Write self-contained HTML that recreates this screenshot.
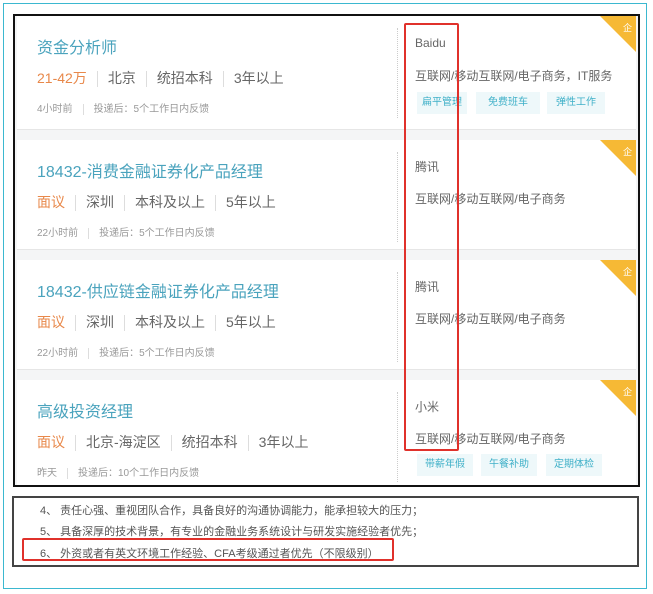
<!DOCTYPE html>
<html><head><meta charset="utf-8"><style>
*{margin:0;padding:0;box-sizing:border-box}
body{width:653px;height:594px;background:#fff;position:relative;overflow:hidden;font-family:"Liberation Sans","Noto Sans CJK SC",sans-serif}
.a{position:absolute;white-space:nowrap}
.outer{left:3px;top:3px;width:644px;height:586px;border:1px solid #3bb8d0}
.blk{left:13px;top:14px;width:627px;height:473px;border:2px solid #111;background:#f4f5f6}
.card{position:absolute;left:2px;width:619px;background:#fff;border-bottom:1px solid #e6e6e6}
.title{left:20px;font-size:16px;color:#4aa3bd}
.meta{left:20px;font-size:14px;color:#666}
.meta .o{color:#e8884a}
.meta i{display:inline-block;width:1px;height:16px;background:#ddd;vertical-align:middle;margin:0 10px}
.sm{left:20px;font-size:10px;color:#999}
.sm i{display:inline-block;width:1px;height:11px;background:#ddd;vertical-align:middle;margin:0 10px}
.dot{left:380px;width:0;border-left:1px dotted #ccc}
.co{left:398px;font-size:12px;color:#666}
.ind{left:398px;font-size:12px;color:#666}
.tag{position:absolute;height:22px;background:#eef8fa;color:#3fb0c8;font-size:10px;line-height:22px;text-align:center}
.tri{position:absolute;right:0;top:0;width:0;height:0;border-top:36px solid #f6b935;border-left:36px solid transparent}
.tri b{position:absolute;top:-31px;right:4px;color:#fff;font-size:9px;font-weight:normal}
.bot{left:12px;top:496px;width:627px;height:71px;border:2px solid #444}
.bot div{position:absolute;left:26px;font-size:11px;color:#555}
.red{border:2px solid #e0312b;border-radius:2px}
</style></head><body>
<div class="a outer"></div>
<div class="a blk">
 <div class="card" style="top:0;height:114px">
  <div class="a title" style="top:18px">资金分析师</div>
  <div class="a meta" style="top:52px"><span class="o">21-42万</span><i></i>北京<i></i>统招本科<i></i>3年以上</div>
  <div class="a sm" style="top:84px">4小时前<i></i>投递后：5个工作日内反馈</div>
  <div class="a dot" style="top:12px;height:90px"></div>
  <div class="a co" style="top:20px">Baidu</div>
  <div class="a ind" style="top:51px">互联网/移动互联网/电子商务，IT服务</div>
  <div class="tag" style="left:400px;top:76px;width:50px">扁平管理</div>
  <div class="tag" style="left:459px;top:76px;width:64px">免费班车</div>
  <div class="tag" style="left:530px;top:76px;width:58px">弹性工作</div>
  <div class="tri"><b>企</b></div>
 </div>
 <div class="card" style="top:124px;height:110px">
  <div class="a title" style="top:18px">18432-消费金融证券化产品经理</div>
  <div class="a meta" style="top:52px"><span class="o">面议</span><i></i>深圳<i></i>本科及以上<i></i>5年以上</div>
  <div class="a sm" style="top:84px">22小时前<i></i>投递后：5个工作日内反馈</div>
  <div class="a dot" style="top:12px;height:90px"></div>
  <div class="a co" style="top:18px">腾讯</div>
  <div class="a ind" style="top:50px">互联网/移动互联网/电子商务</div>
  <div class="tri"><b>企</b></div>
 </div>
 <div class="card" style="top:244px;height:110px">
  <div class="a title" style="top:18px">18432-供应链金融证券化产品经理</div>
  <div class="a meta" style="top:52px"><span class="o">面议</span><i></i>深圳<i></i>本科及以上<i></i>5年以上</div>
  <div class="a sm" style="top:84px">22小时前<i></i>投递后：5个工作日内反馈</div>
  <div class="a dot" style="top:12px;height:90px"></div>
  <div class="a co" style="top:18px">腾讯</div>
  <div class="a ind" style="top:50px">互联网/移动互联网/电子商务</div>
  <div class="tri"><b>企</b></div>
 </div>
 <div class="card" style="top:364px;height:105px;border-bottom:none">
  <div class="a title" style="top:18px">高级投资经理</div>
  <div class="a meta" style="top:52px"><span class="o">面议</span><i></i>北京-海淀区<i></i>统招本科<i></i>3年以上</div>
  <div class="a sm" style="top:84px">昨天<i></i>投递后：10个工作日内反馈</div>
  <div class="a dot" style="top:12px;height:90px"></div>
  <div class="a co" style="top:18px">小米</div>
  <div class="a ind" style="top:50px">互联网/移动互联网/电子商务</div>
  <div class="tag" style="left:400px;top:74px;width:56px">带薪年假</div>
  <div class="tag" style="left:464px;top:74px;width:56px">午餐补助</div>
  <div class="tag" style="left:529px;top:74px;width:56px">定期体检</div>
  <div class="tri"><b>企</b></div>
 </div>
</div>
<div class="a red" style="left:404px;top:23px;width:55px;height:428px"></div>
<div class="a bot">
 <div style="top:4px">4、 责任心强、重视团队合作，具备良好的沟通协调能力，能承担较大的压力；</div>
 <div style="top:25px">5、 具备深厚的技术背景，有专业的金融业务系统设计与研发实施经验者优先；</div>
 <div style="top:47px">6、 外资或者有英文环境工作经验、CFA考级通过者优先（不限级别）</div>
</div>
<div class="a red" style="left:22px;top:538px;width:372px;height:23px"></div>
</body></html>
